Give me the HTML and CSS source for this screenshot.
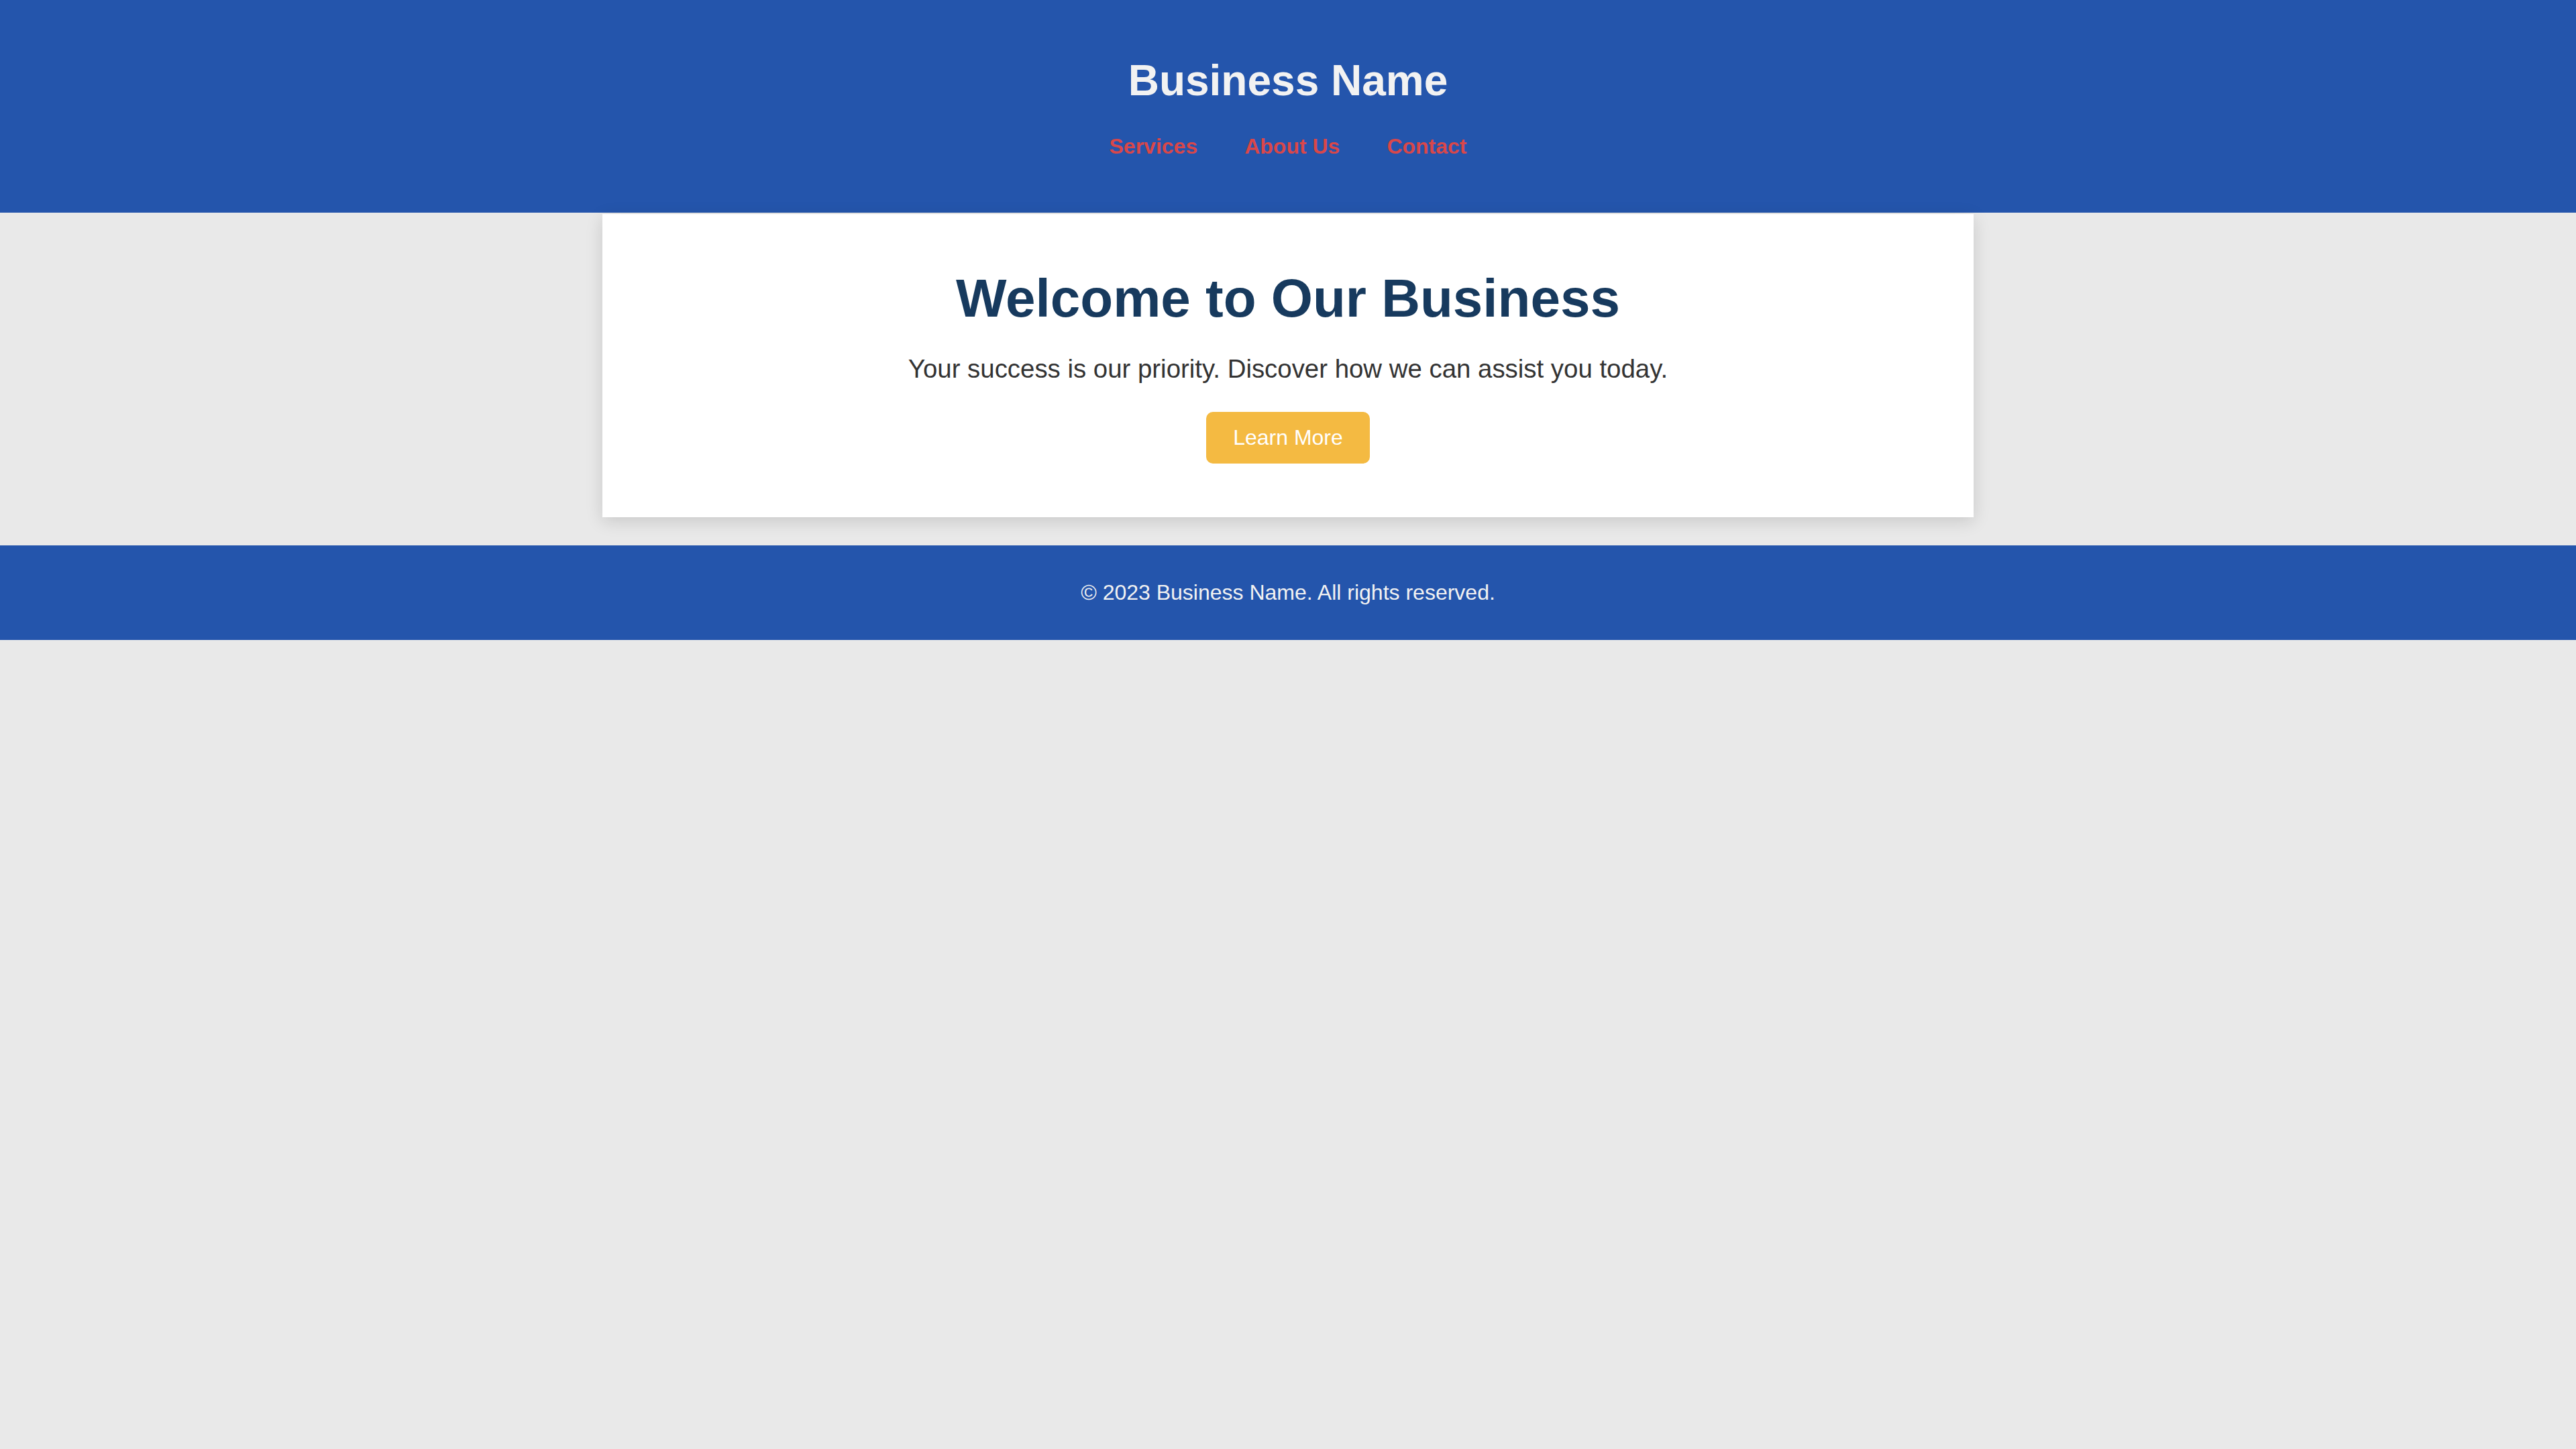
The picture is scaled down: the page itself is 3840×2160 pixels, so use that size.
FILE: index.html
```html
<!DOCTYPE html>
<html lang="en">
<head>
<meta charset="utf-8">
<title>Business Name</title>
<link rel="stylesheet" href="styles.css">
</head>
<body>
<header class="site-header">
  <h1 class="brand">Business Name</h1>
  <nav class="nav">
    <a href="#services" class="nav-link">Services</a>
    <a href="#about" class="nav-link">About Us</a>
    <a href="#contact" class="nav-link">Contact</a>
  </nav>
</header>
<main class="main">
  <section class="hero">
    <h2 class="hero-title">Welcome to Our Business</h2>
    <p class="hero-text">Your success is our priority. Discover how we can assist you today.</p>
    <a href="#" class="btn">Learn More</a>
  </section>
</main>
<footer class="site-footer">
  <p class="footer-text">© 2023 Business Name. All rights reserved.</p>
</footer>
</body>
</html>
```

FILE: styles.css
```css
* { box-sizing: border-box; }
html, body { margin: 0; padding: 0; }
body {
  background: #e9e9e9;
  font-family: "Liberation Sans", Arial, sans-serif;
  color: #333;
}
.site-header {
  background: #2455ac;
  text-align: center;
  padding: 40px 0 80px;
}
.brand {
  margin: 43px 0 43px;
  font-size: 64px;
  font-weight: 700;
  color: #f2f2f2;
  line-height: normal;
}
.nav {
  display: flex;
  justify-content: center;
  gap: 70px;
}
.nav-link {
  font-size: 32px;
  font-weight: 700;
  color: #d9474a;
  text-decoration: none;
}
.main {
  padding: 2px 0 42px;
}
.hero {
  width: 2044px;
  margin: 0 auto;
  background: #fff;
  padding: 80px 40px;
  text-align: center;
  box-shadow: 0 6px 24px rgba(0, 0, 0, 0.14);
}
.hero-title {
  margin: 0 0 37px;
  font-size: 80px;
  font-weight: 700;
  color: #173a5e;
  line-height: normal;
}
.hero-text {
  margin: 0 0 42px;
  font-size: 38.4px;
  color: #333;
  line-height: normal;
}
.btn {
  display: inline-block;
  background: #f4ba42;
  color: #fff;
  font-size: 32px;
  padding: 20px 40px;
  border-radius: 10px;
  text-decoration: none;
  line-height: normal;
  vertical-align: top;
}
.site-footer {
  background: #2455ac;
  text-align: center;
  padding: 52px 0;
}
.footer-text {
  margin: 0;
  font-size: 32px;
  color: #f2f2f2;
  line-height: normal;
}
```
